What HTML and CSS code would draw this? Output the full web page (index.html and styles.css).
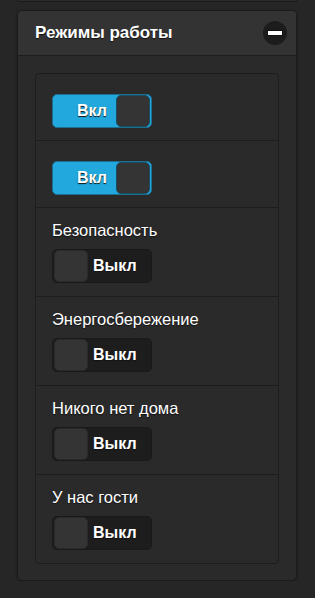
FILE: index.html
```html
<!DOCTYPE html>
<html>

<head>
  <title>Режимы работы</title>
  <link rel="stylesheet" href="styles.css">
</head>

<body>
  <div class="panel-prev"></div>

  <div class="panel">
    <div class="panel-header">
      <span class="panel-title">Режимы работы</span>
      <span class="collapse-btn"><span class="minus"></span></span>
    </div>

    <div class="panel-body">
      <ul class="modes">
        <li class="mode-row">
          <div class="flip on"><span class="flip-text">Вкл</span><span class="handle"></span></div>
        </li>
        <li class="mode-row">
          <div class="flip on"><span class="flip-text">Вкл</span><span class="handle"></span></div>
        </li>
        <li class="mode-row">
          <label class="mode-label">Безопасность</label>
          <div class="flip off"><span class="handle"></span><span class="flip-text">Выкл</span></div>
        </li>
        <li class="mode-row">
          <label class="mode-label">Энергосбережение</label>
          <div class="flip off"><span class="handle"></span><span class="flip-text">Выкл</span></div>
        </li>
        <li class="mode-row">
          <label class="mode-label">Никого нет дома</label>
          <div class="flip off"><span class="handle"></span><span class="flip-text">Выкл</span></div>
        </li>
        <li class="mode-row">
          <label class="mode-label">У нас гости</label>
          <div class="flip off"><span class="handle"></span><span class="flip-text">Выкл</span></div>
        </li>
      </ul>
    </div>
  </div>
</body>

</html>
```

FILE: styles.css
```css
body {
  margin: 0;
  padding: 0;
  background-color: #262626;
  font-family: "Liberation Sans", Arial, sans-serif;
  color: #fff;
}

.panel-prev {
  margin-left: 17px;
  width: 280px;
  height: 2px;
  box-sizing: border-box;
  background-color: #2c2c2c;
  border: 1px solid #1b1b1b;
  border-top: none;
  border-radius: 0 0 5px 5px;
}

.panel {
  margin: 8px 0 0 17px;
  width: 280px;
  box-sizing: border-box;
  background-color: #2a2a2a;
  border: 1px solid #1b1b1b;
  border-radius: 5px;
  box-shadow: 0 1px 3px rgba(0, 0, 0, 0.3);
}

.panel-header {
  height: 44px;
  display: flex;
  align-items: center;
  justify-content: space-between;
  padding: 0 9px 0 17px;
  background-color: #333;
  border-bottom: 1px solid #1e1e1e;
  border-radius: 4px 4px 0 0;
}

.panel-title {
  font-size: 17px;
  font-weight: bold;
  text-shadow: 0 1px 1px #111;
}

.collapse-btn {
  width: 24px;
  height: 24px;
  border-radius: 50%;
  background-color: #1c1c1c;
  display: flex;
  align-items: center;
  justify-content: center;
}

.minus {
  width: 14px;
  height: 4px;
  background-color: #fff;
  border: 1px solid #111;
}

.panel-body {
  padding: 17px 17px 16px 17px;
}

.modes {
  list-style: none;
  margin: 0;
  padding: 0;
  border: 1px solid #1d1d1d;
  border-radius: 4px;
  background-color: #2a2a2a;
}

.mode-row {
  padding: 12px 16px 13px;
  border-bottom: 1px solid #1d1d1d;
}

.mode-row:first-child,
.mode-row:nth-child(2) {
  padding-top: 20px;
  padding-bottom: 12px;
}

.mode-row:last-child {
  border-bottom: none;
}

.mode-label {
  display: block;
  height: 20px;
  line-height: 20px;
  margin-bottom: 9px;
  font-size: 16.5px;
  text-shadow: 0 1px 1px #111;
}

.flip {
  width: 100px;
  height: 34px;
  box-sizing: border-box;
  border-radius: 5px;
  display: flex;
  align-items: center;
  padding: 1px;
}

.flip-text {
  font-size: 16px;
  font-weight: bold;
  text-shadow: 0 1px 1px #111;
}

.flip.on {
  background-color: #22a8dd;
  border: 1px solid #1d6f91;
}

.flip.on .flip-text {
  flex: 1;
  padding-left: 23px;
}

.flip.off {
  background-color: #1d1d1d;
  border: 1px solid #191919;
}

.flip.off .flip-text {
  padding-left: 5px;
}

.handle {
  width: 32px;
  height: 30px;
  border-radius: 5px;
  background-color: #343434;
}

.flip.on .handle {
  border: 1px solid #184e63;
}

.flip.off .handle {
  border: 1px solid #2a2a2a;
}
```
